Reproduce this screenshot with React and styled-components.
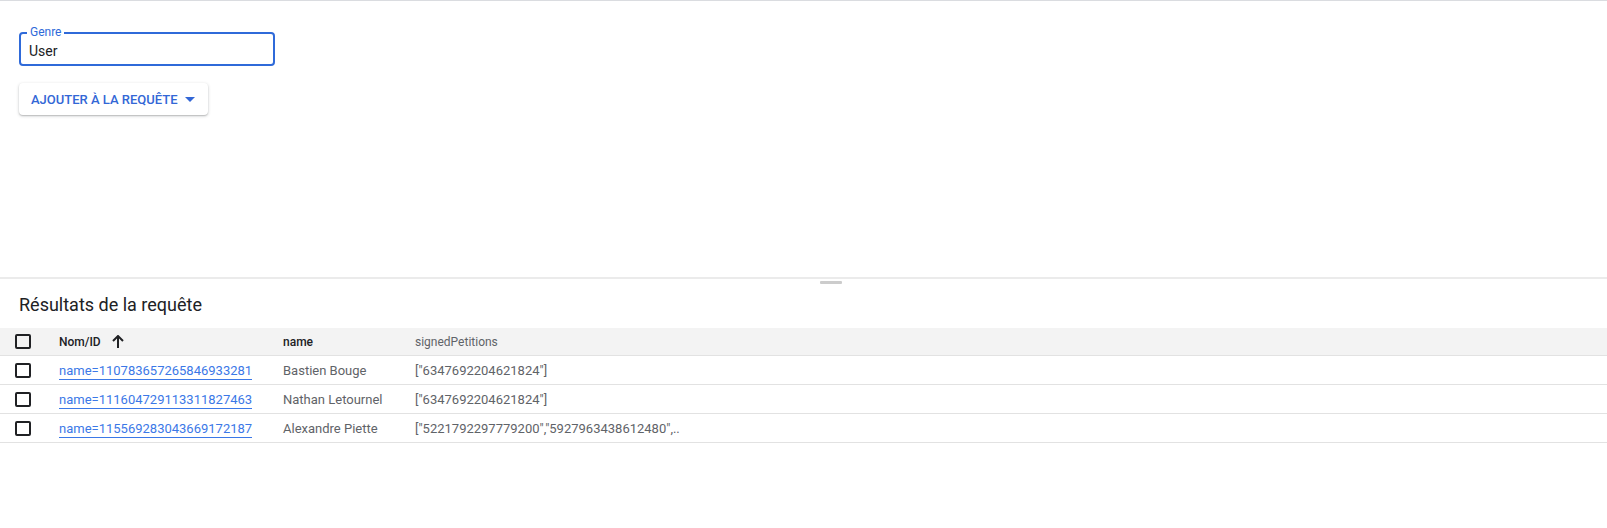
import React from 'react';
import styled, { createGlobalStyle } from 'styled-components';

const GlobalStyle = createGlobalStyle`
  html, body {
    margin: 0;
    padding: 0;
    background: #ffffff;
    font-family: Roboto, "Liberation Sans", Arial, sans-serif;
    color: #202124;
  }
  * { box-sizing: border-box; }
`;

const Page = styled.div`
  width: 1607px;
  height: 528px;
  display: flex;
  flex-direction: column;
  border-top: 1px solid #dadce0;
`;

const QueryPanel = styled.div`
  height: 276px;
  padding: 31px 19px 0;
  display: flex;
  flex-direction: column;
  align-items: flex-start;
  gap: 17px;
`;

const Field = styled.div`
  position: relative;
  width: 256px;
  height: 34px;
  border: 2px solid #2f6ad9;
  border-radius: 4px;
  padding: 0 8px;
  display: flex;
  align-items: center;
`;

const FieldLabel = styled.label`
  position: absolute;
  top: -8px;
  left: 6px;
  padding: 0 3px;
  background: #ffffff;
  font-size: 12px;
  line-height: 13px;
  color: #2f6ad9;
`;

const FieldValue = styled.span`
  font-size: 14px;
  color: #202124;
  margin-top: 4px;
`;

const MenuButton = styled.button`
  display: inline-flex;
  align-items: center;
  gap: 7px;
  height: 32px;
  padding: 0 13px 0 12px;
  border: none;
  border-radius: 4px;
  background: #ffffff;
  box-shadow: 0 1px 3px rgba(60, 64, 67, 0.3), 0 1px 1px rgba(60, 64, 67, 0.15);
  font-family: inherit;
  font-size: 13px;
  font-weight: 500;
  letter-spacing: 0;
  color: #3367d6;
  text-transform: uppercase;
  cursor: pointer;
`;

const Splitter = styled.div`
  height: 2px;
  background: #ebebeb;
`;

const Handle = styled.div`
  width: 22px;
  height: 3px;
  margin: 2px 0 0 820px;
  background: #cccccc;
  border-radius: 1px;
`;

const Results = styled.section`
  display: flex;
  flex-direction: column;
`;

const Title = styled.h2`
  margin: 0;
  padding: 9px 19px 0;
  height: 44px;
  font-size: 18px;
  font-weight: 400;
  line-height: 24px;
  color: #202124;
`;

const Table = styled.div`
  display: flex;
  flex-direction: column;
`;

const Row = styled.div`
  display: grid;
  grid-template-columns: 59px 224px 132px 1fr;
  align-items: center;
  height: ${p => (p.$head ? '28px' : '29px')};
  background: ${p => (p.$head ? '#f3f3f3' : '#ffffff')};
  border-bottom: 1px solid #e2e2e2;
  font-size: 13px;
`;

const CheckCell = styled.div`
  padding-left: 15px;
  display: flex;
  align-items: center;
`;

const Checkbox = styled.span`
  width: 16px;
  height: 15px;
  border: 2px solid #202124;
  border-radius: 2px;
`;

const HeadCell = styled.div`
  display: flex;
  align-items: center;
  gap: 11px;
  font-size: 12px;
  font-weight: ${p => (p.$muted ? 400 : 500)};
  color: ${p => (p.$muted ? '#5f6368' : '#202124')};
`;

const LinkCell = styled.div``;

const IdLink = styled.a`
  color: #3b78e7;
  text-decoration: none;
  border-bottom: 1px solid #3b78e7;
  padding-bottom: 1px;
`;

const Cell = styled.div`
  color: #5f6368;
  white-space: nowrap;
`;

const rows = [
  { id: 'name=110783657265846933281', name: 'Bastien Bouge', petitions: '["6347692204621824"]' },
  { id: 'name=111604729113311827463', name: 'Nathan Letournel', petitions: '["6347692204621824"]' },
  { id: 'name=115569283043669172187', name: 'Alexandre Piette', petitions: '["5221792297779200","5927963438612480",..' },
];

const Caret = () => (
  <svg width="10" height="5" viewBox="0 0 10 5">
    <path d="M0 0 L10 0 L5 5 Z" fill="#3367d6" />
  </svg>
);

const ArrowUp = () => (
  <svg width="12" height="13" viewBox="0 0 12 13">
    <path d="M6 1 L6 13 M1 6 L6 1 L11 6" stroke="#202124" strokeWidth="2" fill="none" />
  </svg>
);

export default function App() {
  return (
    <>
      <GlobalStyle />
      <Page>
        <QueryPanel>
          <Field>
            <FieldLabel>Genre</FieldLabel>
            <FieldValue>User</FieldValue>
          </Field>
          <MenuButton>
            Ajouter à la requête
            <Caret />
          </MenuButton>
        </QueryPanel>
        <Splitter />
        <Handle />
        <Results>
          <Title>Résultats de la requête</Title>
          <Table>
            <Row $head>
              <CheckCell><Checkbox /></CheckCell>
              <HeadCell>Nom/ID <ArrowUp /></HeadCell>
              <HeadCell>name</HeadCell>
              <HeadCell $muted>signedPetitions</HeadCell>
            </Row>
            {rows.map(r => (
              <Row key={r.id}>
                <CheckCell><Checkbox /></CheckCell>
                <LinkCell><IdLink href="#">{r.id}</IdLink></LinkCell>
                <Cell>{r.name}</Cell>
                <Cell>{r.petitions}</Cell>
              </Row>
            ))}
          </Table>
        </Results>
      </Page>
    </>
  );
}
